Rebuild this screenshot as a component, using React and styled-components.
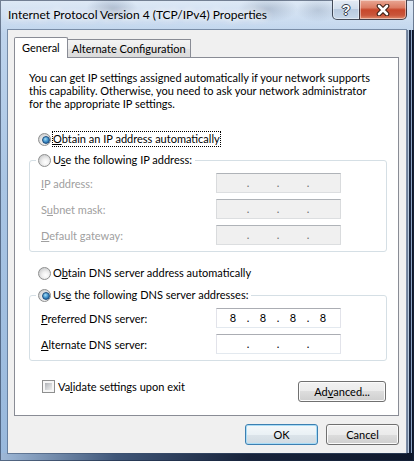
import React from "react";
import styled, { createGlobalStyle, css } from "styled-components";

const UI_FONT = `Lato, "Liberation Sans", "DejaVu Sans", sans-serif`;

const GlobalStyle = createGlobalStyle`
  html, body { margin: 0; padding: 0; background: #ffffff; }
  body { font-family: ${UI_FONT}; font-size: 11px; color: #000; }
  * { box-sizing: border-box; }
`;

const Window = styled.div`
  width: 414px;
  height: 461px;
  display: flex;
  flex-direction: column;
  padding: 0 8px 8px 8px;
  box-shadow: inset 0 0 0 1px rgba(25, 40, 65, 0.55);
  background:
    radial-gradient(ellipse 26px 13px at 112px 9px, rgba(70, 90, 120, 0.3), rgba(70, 90, 120, 0)),
    radial-gradient(ellipse 30px 13px at 268px 9px, rgba(70, 90, 120, 0.25), rgba(70, 90, 120, 0)),
    radial-gradient(ellipse 22px 12px at 318px 10px, rgba(70, 90, 120, 0.2), rgba(70, 90, 120, 0)),
    linear-gradient(to right, #9fb9d8, #3f5678 28%, #18233a 60%, #0f182b) left bottom / 100% 8px no-repeat,
    linear-gradient(to right, #c9d6e6 0 1px, #6d7f99 1px 2px, #b7c8dd 2px 3px, #1a263e 3px 5px, #8fa7c7 5px 6px, #0d1526 6px 8px) right 0 top 30px / 8px calc(100% - 38px) no-repeat,
    linear-gradient(to bottom, rgba(255, 255, 255, 0.45), rgba(255, 255, 255, 0) 34px),
    linear-gradient(to bottom, #c3d7ee 0%, #a9c5e4 40%, #98b8dc 100%);
`;

const TitleBar = styled.div`
  height: 30px;
  display: flex;
  align-items: flex-start;
  justify-content: space-between;
  margin-right: -1px;
`;

const Title = styled.div`
  padding-top: 7px;
  font-size: 12px;
  line-height: 16px;
  white-space: nowrap;
  color: #000;
  text-shadow: 0 0 6px #ffffff, 0 0 10px rgba(255, 255, 255, 0.9), 0 0 14px rgba(255, 255, 255, 0.7);
`;

const CaptionButtons = styled.div`
  display: flex;
  height: 20px;
`;

const captionBase = css`
  height: 20px;
  display: flex;
  align-items: center;
  justify-content: center;
  border: 1px solid rgba(40, 48, 62, 0.85);
  border-top: none;
  box-shadow: inset 0 0 0 1px rgba(255, 255, 255, 0.45);
`;

const HelpButton = styled.div`
  ${captionBase}
  width: 27px;
  border-right: none;
  border-radius: 0 0 0 5px;
  background: linear-gradient(to bottom, #e4ebf4 0%, #d2deec 45%, #b9cadf 50%, #c8d8ea 100%);
  color: #ffffff;
  font-family: "Liberation Sans", sans-serif;
  font-weight: bold;
  font-size: 14px;
  line-height: 14px;
  padding-top: 1px;
  text-shadow: 0 0 1px #2a3340, 1px 0 0 #3a4452, -1px 0 0 #3a4452, 0 1px 0 #3a4452, 0 -1px 0 #3a4452;
`;

const CloseButton = styled.div`
  ${captionBase}
  width: 48px;
  border-radius: 0 0 5px 0;
  background: linear-gradient(to bottom, #e9a794 0%, #dc7d64 40%, #c7472b 52%, #c9553a 80%, #e08b6c 100%);
`;

const CloseGlyph = () => (
  <svg width="14" height="12" viewBox="0 0 14 12">
    <path d="M3 2 L11 10 M11 2 L3 10" stroke="#3a1d14" strokeWidth="4.6" strokeLinecap="round" />
    <path d="M3 2 L11 10 M11 2 L3 10" stroke="#ffffff" strokeWidth="2.6" strokeLinecap="round" />
  </svg>
);

const Client = styled.div`
  flex: 1;
  display: flex;
  flex-direction: column;
  background: #f0f0f0;
  padding: 7px 7px 0 6px;
  box-shadow: 0 0 0 1px rgba(60, 80, 110, 0.55);
`;

const TabStrip = styled.div`
  display: flex;
  align-items: flex-end;
  height: 21px;
  margin-bottom: -1px;
  position: relative;
  z-index: 1;
`;

const Tab = styled.div`
  position: relative;
  white-space: nowrap;
  line-height: 15px;
  border: 1px solid #898c95;
  border-bottom: none;
  ${(p) =>
    p.$active
      ? css`
          z-index: 2;
          height: 21px;
          padding: 2px 7px 0 7px;
          background: #ffffff;
          border-radius: 2px 2px 0 0;
        `
      : css`
          z-index: 1;
          height: 18px;
          margin-bottom: 1px;
          margin-left: -2px;
          padding: 1px 4px 0 5px;
          background: linear-gradient(to bottom, #f3f3f3 0%, #ebebeb 50%, #e2e2e2 50%, #dbdbdb 100%);
        `}
`;

const Panel = styled.div`
  height: 359px;
  display: flex;
  flex-direction: column;
  background: #ffffff;
  border: 1px solid #898c95;
  padding: 13px 11px 0 14px;
`;

const Description = styled.p`
  margin: 0;
  line-height: 13px;
`;

const OptionRow = styled.div`
  display: flex;
  align-items: center;
  height: 16px;
  margin-top: ${(p) => p.$gap || 0}px;
  padding-left: ${(p) => p.$indent || 0}px;
`;

const Radio = styled.span`
  position: relative;
  flex: none;
  width: 13px;
  height: 13px;
  margin-right: 1px;
  border-radius: 50%;
  border: 1px solid #8e8f8f;
  background: radial-gradient(circle at 60% 65%, #ffffff 0%, #f0f0f0 35%, #cfd0d1 75%, #b9babb 100%);
  &::after {
    content: "";
    display: ${(p) => (p.$checked ? "block" : "none")};
    position: absolute;
    left: 2.5px;
    top: 2.5px;
    width: 6px;
    height: 6px;
    border-radius: 50%;
    border: 1px solid #1f4f7e;
    background: radial-gradient(circle at 40% 35%, #a9dcf5 0%, #4f9fd3 40%, #1f63a3 80%, #1a4f82 100%);
  }
`;

const OptionLabel = styled.span`
  white-space: nowrap;
  line-height: 14px;
  border: 1px dotted ${(p) => (p.$focused ? "#000" : "transparent")};
  color: ${(p) => (p.$disabled ? "#a0a0a0" : "#000")};
`;

const Key = styled.span`
  text-decoration: underline;
  text-underline-offset: 1px;
`;

const Group = styled.fieldset`
  margin: ${(p) => p.$gap || 0}px 0 0 0;
  padding: 0 0 6px 0;
  border: 1px solid #d5dfe5;
  border-radius: 3px;
  min-width: 0;
`;

const GroupLegend = styled.legend`
  display: flex;
  align-items: center;
  height: 16px;
  margin-left: 6px;
  padding: 0 2px;
`;

const FieldGrid = styled.div`
  display: grid;
  grid-template-columns: 175px 125px;
  row-gap: 6px;
  margin-top: 5px;
  padding-left: 11px;
`;

const FieldLabel = styled.div`
  display: flex;
  align-items: center;
  height: 20px;
  white-space: nowrap;
  color: ${(p) => (p.$disabled ? "#a0a0a0" : "#000")};
`;

const IpBox = styled.div`
  display: flex;
  align-items: center;
  height: 20px;
  padding-left: 4px;
  border: 1px solid;
  border-color: ${(p) =>
    p.$disabled ? "#afb3b8 #d9dbdd #dcdee0 #d9dbdd" : "#abadb3 #e2e3ea #e3e9ef #e2e3ea"};
  background: ${(p) => (p.$disabled ? "#f0f0f0" : "#ffffff")};
  color: ${(p) => (p.$disabled ? "#6d6d6d" : "#000")};
  line-height: 14px;
`;

const Octet = styled.span`
  width: 24px;
  text-align: center;
`;

const Dot = styled.span`
  width: 6px;
  text-align: center;
`;

const IpField = ({ values = ["", "", "", ""], disabled }) => (
  <IpBox $disabled={disabled}>
    {values.map((v, i) => (
      <React.Fragment key={i}>
        {i > 0 && <Dot>.</Dot>}
        <Octet>{v}</Octet>
      </React.Fragment>
    ))}
  </IpBox>
);

const BottomRow = styled.div`
  display: flex;
  justify-content: space-between;
  align-items: flex-start;
  margin-top: 19px;
  padding-right: 1px;
`;

const CheckRow = styled.label`
  display: flex;
  align-items: center;
  height: 13px;
  margin-left: 13px;
  white-space: nowrap;
`;

const CheckBox = styled.span`
  flex: none;
  width: 13px;
  height: 13px;
  margin-right: 3px;
  padding: 2px;
  border: 1px solid #8e8f8f;
  background:
    linear-gradient(135deg, #aeb1b6 0%, #d4d6d8 55%, #eeeeee 100%) content-box,
    linear-gradient(#f6f6f6, #f6f6f6) padding-box;
`;

const Button = styled.div`
  display: flex;
  align-items: center;
  justify-content: center;
  width: ${(p) => p.$width || 73}px;
  height: 21px;
  margin-top: ${(p) => p.$offset || 0}px;
  border-radius: 3px;
  white-space: nowrap;
  line-height: 14px;
  border: 1px solid ${(p) => (p.$default ? "#3c7fb1" : "#707070")};
  box-shadow: inset 0 0 0 1px ${(p) => (p.$default ? "#a9dcf6" : "#fbfbfb")};
  background: ${(p) =>
    p.$default
      ? "linear-gradient(to bottom, #f4f8fa 0%, #eaf1f5 50%, #dce4ea 50%, #d1dbe2 100%)"
      : "linear-gradient(to bottom, #f2f2f2 0%, #ebebeb 50%, #dddddd 50%, #cfcfcf 100%)"};
`;

const ButtonRow = styled.div`
  display: flex;
  justify-content: flex-end;
  gap: 8px;
  margin-top: 8px;
`;

export default function App() {
  return (
    <>
      <GlobalStyle />
      <Window>
        <TitleBar>
          <Title>Internet Protocol Version 4 (TCP/IPv4) Properties</Title>
          <CaptionButtons>
            <HelpButton>?</HelpButton>
            <CloseButton>
              <CloseGlyph />
            </CloseButton>
          </CaptionButtons>
        </TitleBar>
        <Client>
          <TabStrip>
            <Tab $active>General</Tab>
            <Tab>Alternate Configuration</Tab>
          </TabStrip>
          <Panel>
            <Description>
              You can get IP settings assigned automatically if your network supports
              <br />
              this capability. Otherwise, you need to ask your network administrator
              <br />
              for the appropriate IP settings.
            </Description>

            <OptionRow $gap={21} $indent={9}>
              <Radio $checked />
              <OptionLabel $focused>
                <Key>O</Key>btain an IP address automatically
              </OptionLabel>
            </OptionRow>

            <Group $gap={5}>
              <GroupLegend>
                <Radio />
                <OptionLabel>
                  U<Key>s</Key>e the following IP address:
                </OptionLabel>
              </GroupLegend>
              <FieldGrid>
                <FieldLabel $disabled>
                  <span>
                    <Key>I</Key>P address:
                  </span>
                </FieldLabel>
                <IpField disabled />
                <FieldLabel $disabled>
                  <span>
                    S<Key>u</Key>bnet mask:
                  </span>
                </FieldLabel>
                <IpField disabled />
                <FieldLabel $disabled>
                  <span>
                    <Key>D</Key>efault gateway:
                  </span>
                </FieldLabel>
                <IpField disabled />
              </FieldGrid>
            </Group>

            <OptionRow $gap={13} $indent={9}>
              <Radio />
              <OptionLabel>
                O<Key>b</Key>tain DNS server address automatically
              </OptionLabel>
            </OptionRow>

            <Group $gap={6}>
              <GroupLegend>
                <Radio $checked />
                <OptionLabel>
                  Us<Key>e</Key> the following DNS server addresses:
                </OptionLabel>
              </GroupLegend>
              <FieldGrid>
                <FieldLabel>
                  <span>
                    <Key>P</Key>referred DNS server:
                  </span>
                </FieldLabel>
                <IpField values={["8", "8", "8", "8"]} />
                <FieldLabel>
                  <span>
                    <Key>A</Key>lternate DNS server:
                  </span>
                </FieldLabel>
                <IpField />
              </FieldGrid>
            </Group>

            <BottomRow>
              <CheckRow>
                <CheckBox />
                <span>
                  Va<Key>l</Key>idate settings upon exit
                </span>
              </CheckRow>
              <Button $width={88} $offset={1}>
                Ad<Key>v</Key>anced...
              </Button>
            </BottomRow>
          </Panel>
          <ButtonRow>
            <Button $default>OK</Button>
            <Button>Cancel</Button>
          </ButtonRow>
        </Client>
      </Window>
    </>
  );
}
